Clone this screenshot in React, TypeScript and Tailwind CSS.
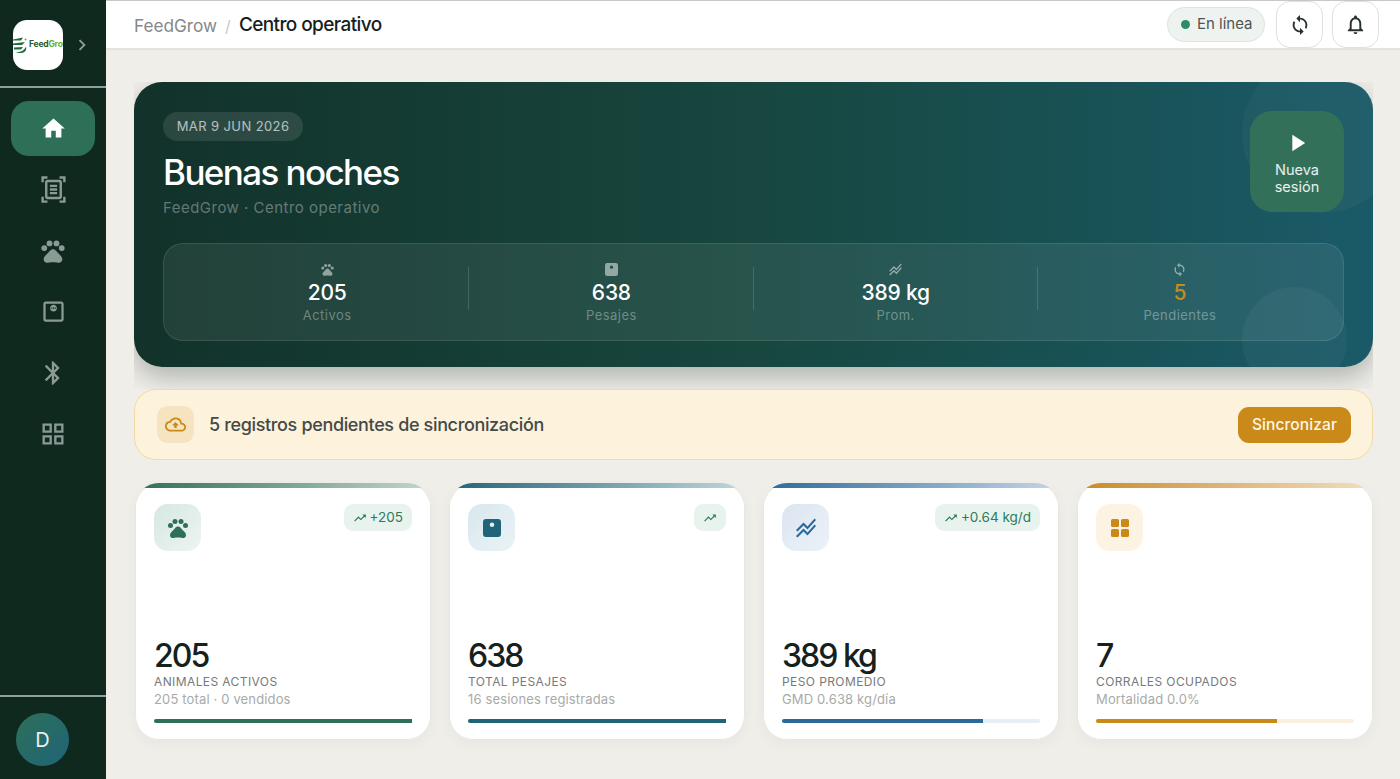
import React from "react";
import {
  MdHome, MdOutlineDocumentScanner, MdPets, MdOutlineMonitorWeight, MdBluetooth, MdOutlineGridView,
  MdChevronRight, MdSync, MdOutlineNotifications, MdPlayArrow, MdStackedLineChart, MdOutlineCloudUpload, MdTrendingUp,
} from "react-icons/md";

const font = { fontFamily: "Inter, 'Noto Sans', sans-serif" };

function ScaleFilled({ className }: { className?: string }) {
  return (
    <svg viewBox="0 0 18 18" className={className} fill="currentColor">
      <path fillRule="evenodd" d="M3 0h12a3 3 0 0 1 3 3v12a3 3 0 0 1-3 3H3a3 3 0 0 1-3-3V3a3 3 0 0 1 3-3zm6 3.500a2.300 2.300 0 1 0 0 4.600 2.300 2.300 0 0 0 0-4.600z" />
    </svg>
  );
}

function GridFilled({ className }: { className?: string }) {
  return (
    <svg viewBox="0 0 20 20" className={className} fill="currentColor">
      <rect x="1" y="1" width="8" height="8" rx="1.500" />
      <rect x="11" y="1" width="8" height="8" rx="1.500" />
      <rect x="1" y="11" width="8" height="8" rx="1.500" />
      <rect x="11" y="11" width="8" height="8" rx="1.500" />
    </svg>
  );
}

function Stat({ icon, value, label, gold, divider }: { icon: React.ReactNode; value: string; label: string; gold?: boolean; divider?: boolean }) {
  return (
    <div className="flex-1 relative flex flex-col items-center">
      <div className="text-white/50 h-[18px] flex items-center text-[15px]">{icon}</div>
      <div className={`text-[21px] leading-[26px] mt-[2px] font-medium tracking-[-0.2px] ${gold ? "text-[#c98a1a]" : "text-white"}`}>{value}</div>
      <div className="text-[13px] leading-[18px] tracking-[0.45px] text-white/35">{label}</div>
      {divider && <div className="absolute right-0 top-[7px] h-[43px] w-px bg-white/15" />}
    </div>
  );
}

function Card({ icon, iconClass, bar, badge, value, label, sub, fill, fillColor, track }: {
  icon: React.ReactNode; iconClass: string; bar: string; badge?: string | boolean; value: string; label: string; sub: string; fill: string; fillColor: string; track: string;
}) {
  return (
    <div className="relative overflow-hidden bg-white rounded-[24px] shadow-[inset_0_0_0_1px_#e8e6e0,0_4px_14px_rgba(0,0,0,0.04)] px-[19px] pt-[21px] pb-[17px] flex flex-col h-[257px]">
      <div className={`absolute left-0 right-0 top-0 h-[5px] ${bar}`} />
      <div className="flex justify-between items-start">
        <div className={`w-[47px] h-[47px] rounded-[14px] flex items-center justify-center text-[24px] ${iconClass}`}>{icon}</div>
        {badge && (
          <div className="h-[27px] rounded-[9px] bg-[#e8f3ee] text-[#2d7a5c] text-[13.5px] px-[9px] flex items-center gap-[3px]">
            <MdTrendingUp className="text-[14px]" />
            {typeof badge === "string" && <span>{badge}</span>}
          </div>
        )}
      </div>
      <div className="mt-auto">
        <div className="text-[32px] leading-[34px] font-medium tracking-[-2px] text-[#16201d]">{value}</div>
        <div className="text-[12px] leading-[17px] tracking-[0.4px] text-[#77797a]">{label}</div>
        <div className="text-[13px] leading-[19px] tracking-[0.15px] text-[#a8aaa9]">{sub}</div>
        <div className={`h-[4px] rounded-full mt-[10px] ${track}`}>
          <div className={`h-full rounded-l-full ${fillColor} ${fill}`} />
        </div>
      </div>
    </div>
  );
}

export default function App() {
  return (
    <div className="h-screen w-full flex overflow-hidden bg-[#f0eee9]" style={font}>
      <aside className="w-[106px] shrink-0 bg-[#10291f] flex flex-col">
        <div className="h-[88px] border-b-2 border-[#8f9f99] flex items-center pl-[13px] pt-[3px]">
          <div className="w-[50px] h-[50px] bg-white rounded-[14px] overflow-hidden flex items-center shrink-0">
            <svg viewBox="0 0 16 16" className="w-[16px] h-[16px] shrink-0">
              <path d="M0 2.500l10-2-2 3H0zM0 6.500l12-1.500-3 3H0zM1 10.500l9-.5-2 2.500H1zM3 15c4 .5 8-1 10-5.500 1 3-1 6.500-5 6.500-2 0-4-.2-5-1z" fill="#1f6d3a" />
              <circle cx="12.500" cy="2.500" r="1" fill="#5fae3c" />
            </svg>
            <span className="text-[8.500px] font-bold tracking-[-0.2px] whitespace-nowrap text-[#1d5c33]">Feed<span className="text-[#5fae3c]">Grow</span></span>
          </div>
          <MdChevronRight className="text-[22px] text-[#8f9f99] ml-[8px]" />
        </div>
        <nav className="flex-1 flex flex-col pl-[11px] pt-[13px] text-[#8a9b95]">
          <div className="w-[84px] h-[55px] rounded-[18px] bg-[#2e6f58] text-white flex items-center justify-center text-[27px]"><MdHome /></div>
          <div className="w-[84px] h-[61px] mt-[3px] flex items-center justify-center text-[29px]"><MdOutlineDocumentScanner /></div>
          <div className="w-[84px] h-[61px] flex items-center justify-center text-[28px]"><MdPets /></div>
          <div className="w-[84px] h-[61px] flex items-center justify-center text-[27px]"><MdOutlineMonitorWeight /></div>
          <div className="w-[84px] h-[61px] flex items-center justify-center text-[28px]"><MdBluetooth /></div>
          <div className="w-[84px] h-[61px] flex items-center justify-center text-[28px]"><MdOutlineGridView /></div>
        </nav>
        <div className="h-[84px] border-t-2 border-[#8f9f99] pl-[16px] pt-[16px]">
          <div className="w-[53px] h-[53px] rounded-full bg-gradient-to-br from-[#2e6f58] to-[#1f6478] text-white/90 text-[20px] flex items-center justify-center">D</div>
        </div>
      </aside>

      <div className="flex-1 min-w-0 flex flex-col">
        <header className="h-[50px] shrink-0 bg-white border-t border-t-[#c8c8c8] border-b-2 border-b-[#e5e3dd] flex items-center pl-[28px] pr-[21px]">
          <div className="flex items-center pt-[2px]">
            <span className="text-[17.200px] text-[#85888a]">FeedGrow</span>
            <span className="text-[16px] text-[#c9c9c6] mx-[8px]">/</span>
            <span className="text-[19px] font-medium tracking-[-0.6px] text-[#16201d]">Centro operativo</span>
          </div>
          <div className="ml-auto flex items-center">
            <div className="h-[35px] w-[98px] rounded-full bg-[#eff3f0] border border-[#dfe3df] flex items-center pl-[13px] gap-[7px] text-[15px] text-[#4d5654]">
              <span className="w-[9px] h-[9px] rounded-full bg-[#2e8b68]" />
              En línea
            </div>
            <div className="w-[47px] h-[47px] ml-[11px] rounded-[14px] border border-[#e2e0da] flex items-center justify-center text-[22px] text-[#26302d]"><MdSync /></div>
            <div className="w-[47px] h-[47px] ml-[9px] rounded-[14px] border border-[#e2e0da] flex items-center justify-center text-[23px] text-[#26302d]"><MdOutlineNotifications /></div>
          </div>
        </header>

        <main className="flex-1 min-h-0 pl-[28px] pr-[27px] pt-[32px] flex flex-col">
          <div className="shrink-0 overflow-hidden pb-[22px]">
            <section className="relative overflow-hidden h-[285px] rounded-[28px] bg-gradient-to-r from-[#12322a] via-[#17473f] to-[#1a5a68] pl-[29px] pr-[29px] pt-[30px] shadow-[0_10px_26px_rgba(20,40,35,0.3)]">
              <div className="absolute -top-[29px] -right-[29px] w-[160px] h-[160px] rounded-full bg-white/[0.03]" />
              <div className="absolute -bottom-[25px] right-[26px] w-[105px] h-[105px] rounded-full bg-white/[0.04]" />
              <div className="relative flex justify-between items-start">
                <div>
                  <div className="inline-flex h-[29px] w-[140px] rounded-full bg-white/10 items-center justify-center text-[13px] tracking-[0.4px] text-white/65">MAR 9 JUN 2026</div>
                  <div className="text-[35px] leading-[42px] mt-[10px] font-medium tracking-[-1.6px] text-white">Buenas noches</div>
                  <div className="text-[15px] leading-[20px] mt-[5px] tracking-[0.48px] text-white/35">FeedGrow · Centro operativo</div>
                </div>
                <div className="-mt-[1px] w-[94px] h-[101px] rounded-[22px] bg-[#33705a] flex flex-col items-center pt-[18px] text-white">
                  <MdPlayArrow className="text-[28px]" />
                  <div className="text-[14.500px] leading-[17px] text-center mt-[4px] text-white/90">Nueva<br />sesión</div>
                </div>
              </div>
              <div className="relative mt-[25px] h-[98px] rounded-[20px] bg-white/[0.07] border border-white/10 flex items-center px-[21px]">
                <Stat icon={<MdPets />} value="205" label="Activos" divider />
                <Stat icon={<ScaleFilled className="w-[13px] h-[13px]" />} value="638" label="Pesajes" divider />
                <Stat icon={<MdStackedLineChart />} value="389 kg" label="Prom." divider />
                <Stat icon={<MdSync />} value="5" label="Pendientes" gold />
              </div>
            </section>
          </div>

          <section className="shrink-0 h-[71px] rounded-[22px] bg-[#fdf2dc] border border-[#f3d9a5] flex items-center pl-[22px] pr-[21px]">
            <div className="w-[37px] h-[37px] rounded-[11px] bg-[#f6e3c0] flex items-center justify-center text-[21px] text-[#c98a1a]"><MdOutlineCloudUpload /></div>
            <span className="ml-[15px] text-[18px] font-medium tracking-[-0.35px] text-[#444a48]">5 registros pendientes de sincronización</span>
            <div className="ml-auto h-[36px] w-[113px] rounded-[11px] bg-[#c98a1a] flex items-center justify-center text-[15.500px] tracking-[0.1px] font-medium text-[#fdf6e7]">Sincronizar</div>
          </section>

          <section className="mt-[23px] ml-[1px] grid grid-cols-4 gap-[18px]">
            <Card icon={<MdPets />} iconClass="bg-gradient-to-br from-[#d6e8e1] to-[#edf4f1] text-[#2e6f58]" bar="bg-gradient-to-r from-[#2e6f58] to-[#c3d7cf]" badge="+205" value="205" label="ANIMALES ACTIVOS" sub="205 total · 0 vendidos" fill="w-full" fillColor="bg-[#2e6f58]" track="bg-[#e6f0ec]" />
            <Card icon={<ScaleFilled className="w-[18px] h-[18px]" />} iconClass="bg-gradient-to-br from-[#d8e8ed] to-[#eaf3f6] text-[#1f6478]" bar="bg-gradient-to-r from-[#1f6478] to-[#c0d7de]" badge value="638" label="TOTAL PESAJES" sub="16 sesiones registradas" fill="w-full" fillColor="bg-[#1f6478]" track="bg-[#e3eef2]" />
            <Card icon={<MdStackedLineChart />} iconClass="bg-gradient-to-br from-[#dbe5f0] to-[#ecf2f9] text-[#2a6a9a]" bar="bg-gradient-to-r from-[#2a6a9a] to-[#c5d6e6]" badge="+0.64 kg/d" value="389 kg" label="PESO PROMEDIO" sub="GMD 0.638 kg/día" fill="w-[78%]" fillColor="bg-[#2a6a9a]" track="bg-[#e6eef6]" />
            <Card icon={<GridFilled className="w-[20px] h-[20px]" />} iconClass="bg-[#fdf3e3] text-[#c98a1a]" bar="bg-gradient-to-r from-[#c98a1a] to-[#f0dfc0]" value="7" label="CORRALES OCUPADOS" sub="Mortalidad 0.0%" fill="w-[70%]" fillColor="bg-[#c98a1a]" track="bg-[#faf0df]" />
          </section>
        </main>
      </div>
    </div>
  );
}
